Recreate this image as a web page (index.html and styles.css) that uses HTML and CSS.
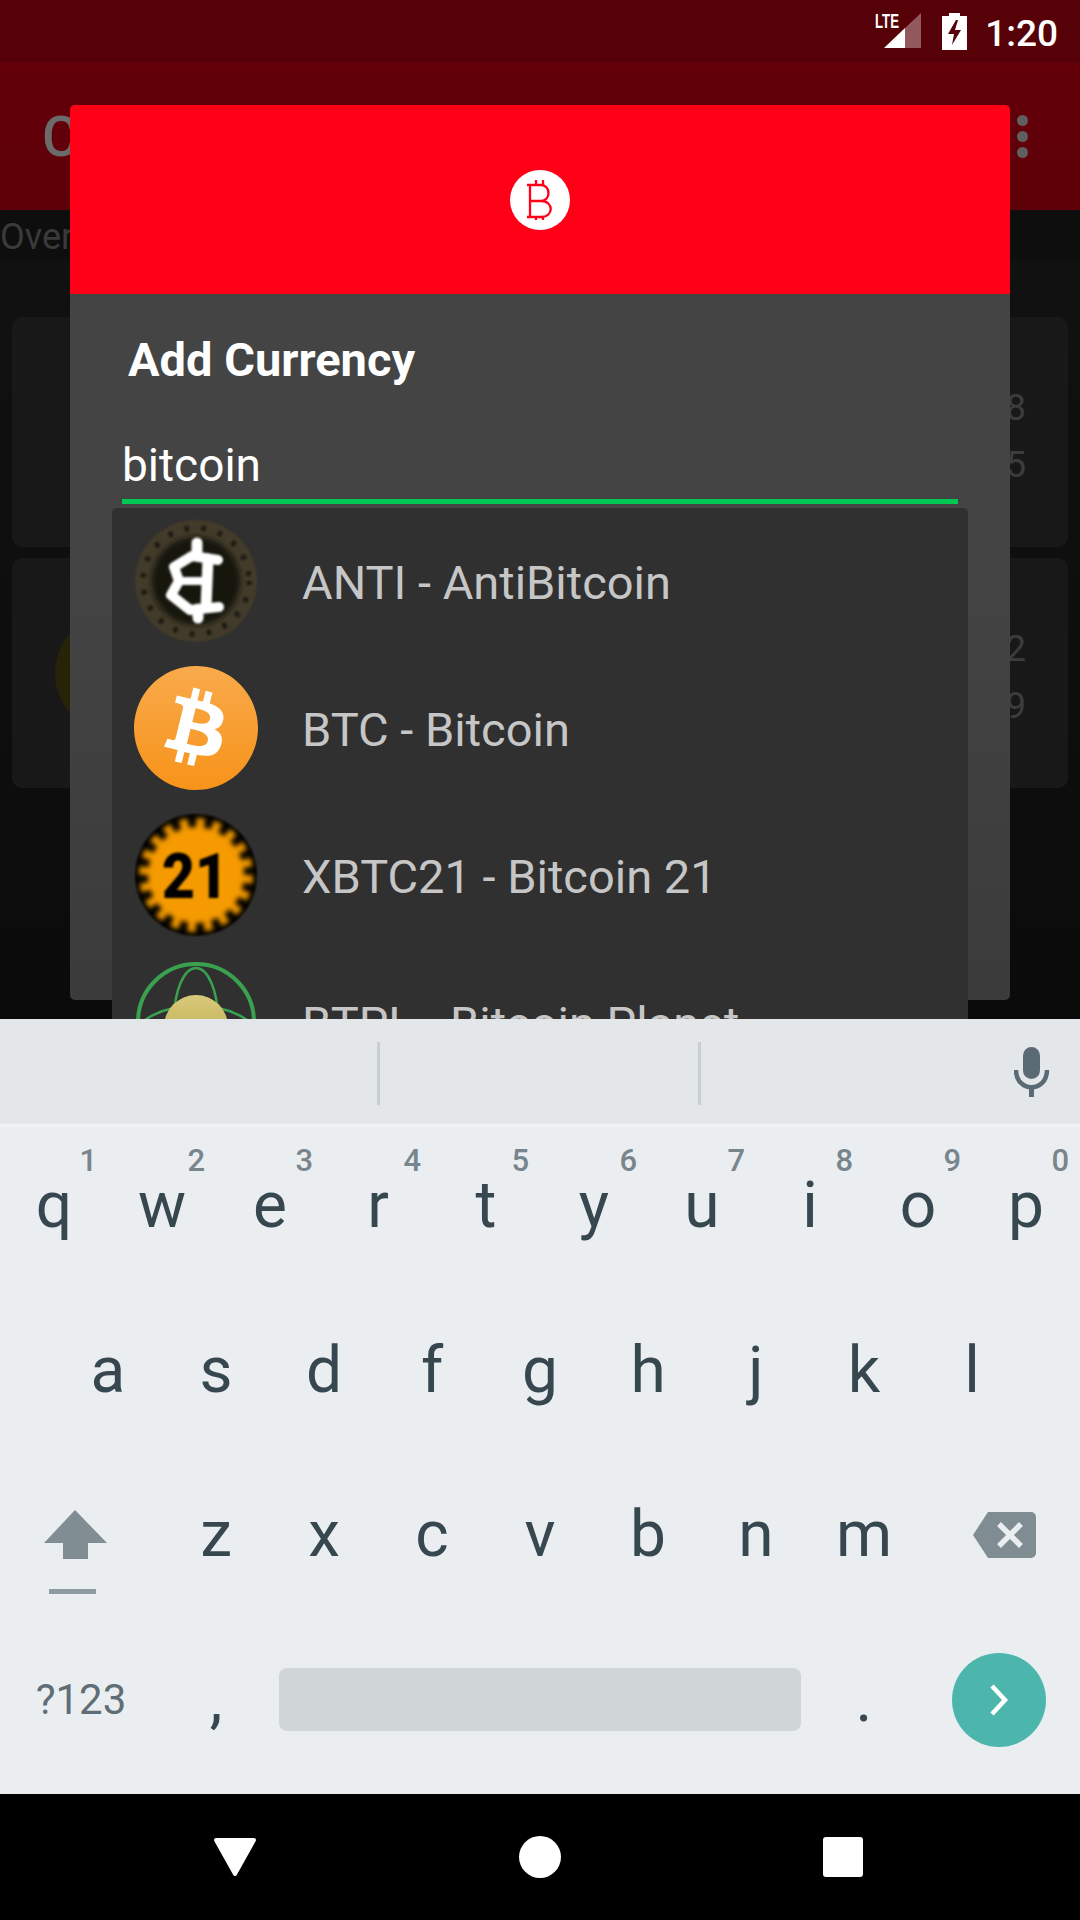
FILE: index.html
```html
<!DOCTYPE html>
<html lang="en">
<head>
<meta charset="utf-8">
<title>Add Currency</title>
<link rel="stylesheet" href="styles.css">
</head>
<body>
<div class="screen">
  <main class="app">
    <header class="status">
      <svg class="status-signal" width="48" height="46" viewBox="0 -6 48 46">
        <path d="M10 36 31 16 31 36Z" fill="#fff"/>
        <path d="M31 16 47 1 47 36 31 36Z" fill="#fff" fill-opacity=".35"/>
        <text x="1" y="16" class="lte" textLength="24" lengthAdjust="spacingAndGlyphs">LTE</text>
      </svg>
      <svg class="status-battery" width="25" height="37" viewBox="0 0 25 37">
        <path d="M0 3h7V0h11v3h7v34H0Z M14 7 6 21h6l-2 11 9-15h-6l3-10Z" fill="#fff" fill-rule="evenodd"/>
      </svg>
      <span class="status-time">1:20</span>
    </header>
    <div class="appbar">
      <span class="appbar-title">C</span>
      <span class="appbar-dots"><i></i><i></i><i></i></span>
    </div>
    <div class="tabs"><span class="tab">Over</span></div>
    <section class="cards">
      <article class="card">
        <span class="card-value">8</span>
        <span class="card-value">5</span>
      </article>
      <article class="card">
        <span class="card-coin"></span>
        <span class="card-value">2</span>
        <span class="card-value">9</span>
      </article>
    </section>

    <div class="dialog">
      <div class="dialog-head">
        <svg width="60" height="60" viewBox="0 0 60 60">
          <circle cx="30" cy="30" r="30" fill="#fff"/>
          <path d="M17 15 H31 C41 15 41 31 31 31 H20 M31 31 C44 31 44 47 31 47 H17 M20 15 V47 M26 10 V15 M33 10 V15 M26 47 V50 M33 47 V50" fill="none" stroke="#ff0016" stroke-width="2.3"/>
        </svg>
      </div>
      <div class="dialog-body">
        <h2 class="dialog-title">Add Currency</h2>
        <div class="field">bitcoin</div>
      </div>
      <ul class="dropdown">
        <li class="option">
          <svg class="coin" viewBox="0 0 124 124">
            <defs>
              <filter id="soft" x="-20%" y="-20%" width="140%" height="140%"><feGaussianBlur stdDeviation="2.4"/></filter>
              <filter id="softer" x="-20%" y="-20%" width="140%" height="140%"><feGaussianBlur stdDeviation="1.2"/></filter>
              <linearGradient id="gold" x1="0" y1="0" x2="0" y2="1">
                <stop offset="0" stop-color="#d8c97a"/>
                <stop offset="1" stop-color="#b8a648"/>
              </linearGradient>
            </defs>
            <circle cx="62" cy="62" r="61" fill="#423a29" filter="url(#softer)"/>
            <circle cx="62" cy="62" r="53" fill="none" stroke="#17140e" stroke-width="5" stroke-dasharray="4 13" filter="url(#softer)"/>
            <circle cx="62" cy="62" r="44" fill="#14120d" filter="url(#soft)"/>
            <g filter="url(#softer)" fill="none" stroke="#fff" stroke-linejoin="round" stroke-linecap="round">
              <path d="M63 24V36M64 90V99" stroke-width="11"/>
              <path d="M84 41 58 37 40 48 45 62 37 76 56 91 85 88" stroke-width="10"/>
              <path d="M74 40 72 88" stroke-width="11"/>
              <path d="M45 62H72" stroke-width="8"/>
            </g>
          </svg>
          <span class="option-label">ANTI - AntiBitcoin</span>
        </li>
        <li class="option">
          <svg class="coin" viewBox="0 0 24 24">
            <defs>
              <linearGradient id="btc" x1="0" y1="0" x2="0" y2="1">
                <stop offset="0" stop-color="#f9aa4b"/>
                <stop offset="1" stop-color="#f7931a"/>
              </linearGradient>
            </defs>
            <circle cx="12" cy="12" r="11" fill="#fff"/>
            <path fill="url(#btc)" d="M23.638 14.904c-1.602 6.43-8.113 10.34-14.542 8.736C2.67 22.05-1.244 15.525.362 9.105 1.962 2.67 8.475-1.243 14.9.358c6.43 1.605 10.342 8.115 8.738 14.548v-.002zm-6.35-4.613c.24-1.59-.974-2.45-2.64-3.03l.54-2.153-1.315-.33-.525 2.107c-.345-.087-.705-.167-1.064-.25l.526-2.127-1.32-.33-.54 2.165c-.285-.067-.565-.132-.84-.2l-1.815-.45-.35 1.407s.975.225.955.236c.535.136.63.486.615.766l-1.477 5.92c-.075.166-.24.406-.614.314.015.02-.96-.24-.96-.24l-.66 1.51 1.71.426.93.242-.54 2.19 1.32.327.54-2.17c.36.1.705.19 1.05.273l-.51 2.154 1.32.33.545-2.19c2.24.427 3.93.257 4.64-1.774.57-1.637-.03-2.58-1.217-3.196.854-.193 1.5-.76 1.68-1.93h.01zm-3.01 4.22c-.404 1.64-3.157.75-4.05.53l.72-2.9c.896.23 3.757.67 3.33 2.37zm.41-4.24c-.37 1.49-2.662.735-3.405.55l.654-2.64c.744.18 3.137.524 2.75 2.084v.006z"/>
          </svg>
          <span class="option-label">BTC - Bitcoin</span>
        </li>
        <li class="option">
          <svg class="coin" viewBox="0 0 124 124">
            <circle cx="62" cy="62" r="61" fill="#000" filter="url(#softer)"/>
            <g filter="url(#soft)">
              <circle cx="62" cy="62" r="48" fill="#f59a00"/>
              <circle cx="62" cy="62" r="50" fill="none" stroke="#f59a00" stroke-width="14" stroke-dasharray="7.85 7.85"/>
            </g>
            <text x="28" y="85" class="coin-21" textLength="66" lengthAdjust="spacingAndGlyphs" filter="url(#softer)">21</text>
          </svg>
          <span class="option-label">XBTC21 - Bitcoin 21</span>
        </li>
        <li class="option">
          <svg class="coin" viewBox="0 0 124 124">
            <circle cx="62" cy="62" r="58" fill="none" stroke="#3aa14e" stroke-width="4"/>
            <ellipse cx="62" cy="60" rx="22" ry="52" fill="none" stroke="#3aa14e" stroke-width="2.5"/>
            <ellipse cx="62" cy="76" rx="60" ry="30" fill="none" stroke="#3aa14e" stroke-width="2.5"/>
            <circle cx="62" cy="67" r="32" fill="url(#gold)"/>
          </svg>
          <span class="option-label">BTPL - Bitcoin Planet</span>
        </li>
      </ul>
    </div>
  </main>

  <section class="keyboard">
    <div class="strip">
      <span class="strip-cell"></span>
      <span class="strip-cell strip-cell-mid"></span>
      <span class="strip-mic">
        <svg width="36" height="52" viewBox="0 0 36 52">
          <rect x="9" y="1" width="17" height="32" rx="8.5" fill="#5b6b75"/>
          <path d="M2 24 C2 47 33 47 33 24" fill="none" stroke="#5b6b75" stroke-width="4.5"/>
          <rect x="15" y="40" width="5" height="11" fill="#5b6b75"/>
        </svg>
      </span>
    </div>
    <div class="keys">
      <div class="row">
        <span class="key">q<sup class="hint">1</sup></span>
        <span class="key">w<sup class="hint">2</sup></span>
        <span class="key">e<sup class="hint">3</sup></span>
        <span class="key">r<sup class="hint">4</sup></span>
        <span class="key">t<sup class="hint">5</sup></span>
        <span class="key">y<sup class="hint">6</sup></span>
        <span class="key">u<sup class="hint">7</sup></span>
        <span class="key">i<sup class="hint">8</sup></span>
        <span class="key">o<sup class="hint">9</sup></span>
        <span class="key">p<sup class="hint">0</sup></span>
      </div>
      <div class="row row-home">
        <span class="key">a</span><span class="key">s</span><span class="key">d</span><span class="key">f</span><span class="key">g</span><span class="key">h</span><span class="key">j</span><span class="key">k</span><span class="key">l</span>
      </div>
      <div class="row">
        <span class="key key-wide">
          <svg class="icon-shift" width="66" height="86" viewBox="0 0 66 86">
            <path d="M33 0 65 33H46V49H21V33H2Z" fill="#808d93"/>
            <rect x="7" y="79" width="47" height="5" fill="#8f9ba2"/>
          </svg>
        </span>
        <span class="key">z</span><span class="key">x</span><span class="key">c</span><span class="key">v</span><span class="key">b</span><span class="key">n</span><span class="key">m</span>
        <span class="key key-wide">
          <svg class="icon-delete" width="64" height="48" viewBox="0 0 64 48">
            <path d="M15 1H58a5 5 0 0 1 5 5V42a5 5 0 0 1-5 5H15L0 24Z" fill="#7f8c92"/>
            <path d="M26 13 48 35M48 13 26 35" stroke="#ebeef1" stroke-width="5.5"/>
          </svg>
        </span>
      </div>
      <div class="row">
        <span class="key key-wide key-sym">?123</span>
        <span class="key">,</span>
        <span class="key key-space"><span class="spacebar"></span></span>
        <span class="key">.</span>
        <span class="key key-wide">
          <span class="enter">
            <svg width="22" height="32" viewBox="0 0 22 32"><path d="M4 2 17 16 4 30" fill="none" stroke="#fff" stroke-width="4.5"/></svg>
          </span>
        </span>
      </div>
    </div>
  </section>

  <nav class="navbar">
    <svg width="44" height="40" viewBox="0 0 44 40"><path d="M3 3H41L22 37Z" fill="#fff" stroke="#fff" stroke-width="4" stroke-linejoin="round"/></svg>
    <span class="nav-home"></span>
    <span class="nav-recent"></span>
  </nav>
</div>
</body>
</html>
```

FILE: styles.css
```css
* { box-sizing: border-box; }

html, body {
  margin: 0;
  padding: 0;
  background: #000;
}

body {
  font-family: Roboto, "Noto Sans", sans-serif;
}

.screen {
  width: 1080px;
  height: 1920px;
  display: flex;
  flex-direction: column;
  overflow: hidden;
}

/* App behind the dialog */
.app {
  position: relative;
  height: 1019px;
  overflow: hidden;
  background: linear-gradient(#131313, #0b0b0b);
}

.status {
  height: 63px;
  background: #560008;
  display: flex;
  align-items: flex-start;
  justify-content: flex-end;
  padding: 6px 22px 0 0;
}

.status-signal { margin-right: 20px; }

.lte {
  font: 700 20px "Liberation Sans", sans-serif;
  fill: #fff;
}

.status-battery { margin-top: 7px; margin-right: 18px; }

.status-time {
  color: #fff;
  font-size: 37px;
  font-weight: 500;
  line-height: 44px;
  margin-top: 6px;
}

.appbar {
  height: 147px;
  background: linear-gradient(#63000a, #5e0008);
  display: flex;
  align-items: center;
  justify-content: space-between;
  padding: 0 52px 0 42px;
}

.appbar-title {
  color: #6b6b6b;
  font-size: 56px;
  font-weight: 500;
}

.appbar-dots {
  display: flex;
  flex-direction: column;
  gap: 5px;
}

.appbar-dots i {
  width: 11px;
  height: 11px;
  border-radius: 50%;
  background: #5f5f5f;
}

.tabs {
  height: 50px;
  background: #0e0e0e;
}

.tab {
  color: #3a3a3a;
  font-size: 36px;
  line-height: 54px;
}

.cards {
  padding: 57px 12px 0;
  display: flex;
  flex-direction: column;
  gap: 11px;
}

.card {
  position: relative;
  height: 230px;
  border-radius: 10px;
  background: #181818;
  display: flex;
  flex-direction: column;
  align-items: flex-end;
  justify-content: center;
  gap: 20px;
  padding: 10px 42px 0 0;
}

.card-value {
  color: #3c3c3c;
  font-size: 36px;
  line-height: 37px;
}

.card-coin {
  position: absolute;
  left: 43px;
  top: 55px;
  width: 120px;
  height: 120px;
  border-radius: 50%;
  background: #282208;
}

/* Dialog */
.dialog {
  position: absolute;
  left: 70px;
  top: 105px;
  width: 940px;
  height: 895px;
  border-radius: 5px;
  background: linear-gradient(#444444 50%, #3b3b3b);
}

.dialog-head {
  height: 189px;
  background: #ff0016;
  border-radius: 5px 5px 0 0;
  display: flex;
  align-items: center;
  justify-content: center;
}

.dialog-body {
  padding: 0 52px;
}

.dialog-title {
  margin: 0;
  padding: 40px 0 0 6px;
  color: #fff;
  font-size: 47px;
  font-weight: 700;
  line-height: 52px;
}

.field {
  margin-top: 48px;
  height: 70px;
  border-bottom: 5px solid #00c853;
  color: #fff;
  font-size: 46px;
  line-height: 62px;
}

.dropdown {
  position: absolute;
  left: 42px;
  top: 403px;
  width: 856px;
  margin: 0;
  padding: 11px 0 0;
  list-style: none;
  border-radius: 5px;
  background: #303030;
  display: flex;
  flex-direction: column;
  gap: 23px;
}

.option {
  display: flex;
  align-items: center;
  height: 124px;
  padding-left: 22px;
  flex: none;
}

.coin {
  width: 124px;
  height: 124px;
  flex: none;
}

.coin-21 {
  font: 900 63px Roboto, sans-serif;
  fill: #000;
}

.option-label {
  margin-left: 44px;
  padding-top: 3px;
  color: #c6c6c6;
  font-size: 47px;
}

/* Keyboard */
.keyboard {
  height: 775px;
  background: #ebeef1;
  display: flex;
  flex-direction: column;
}

.strip {
  flex: none;
  height: 108px;
  background: #e3e7ea;
  border-bottom: 3px solid #f1f3f5;
  display: flex;
  align-items: center;
}

.strip-cell {
  width: 380px;
  height: 63px;
  margin-top: 3px;
  border-right: 3px solid #c9ced1;
}

.strip-cell-mid { width: 321px; }

.strip-mic {
  flex: 1;
  display: flex;
  align-items: center;
  justify-content: flex-end;
  padding-right: 30px;
}

.keys {
  flex: 1;
  margin-top: -3px;
  padding-bottom: 12px;
  display: grid;
  grid-template-rows: repeat(4, 1fr);
}

.row {
  display: flex;
  align-items: stretch;
}

.row-home { padding-left: 54px; }

.key {
  position: relative;
  flex: none;
  width: 108px;
  display: flex;
  align-items: center;
  justify-content: center;
  color: #37474f;
  font-size: 64px;
  line-height: 1;
}

.hint {
  position: absolute;
  right: 11px;
  top: 21px;
  color: #78858d;
  font-size: 31px;
  font-weight: 500;
  line-height: 1;
}

.key-wide { width: 162px; }

.key-sym {
  color: #5f6e76;
  font-size: 42px;
}

.key-space { width: 540px; }

.icon-shift { margin: 36px 12px 0 0; }

.icon-delete { margin-left: 12px; }

.spacebar {
  align-self: center;
  width: 522px;
  height: 63px;
  border-radius: 8px;
  background: #d0d5d8;
}

.enter {
  width: 94px;
  height: 94px;
  border-radius: 50%;
  background: #4db6ac;
  display: flex;
  align-items: center;
  justify-content: center;
}

/* System navigation */
.navbar {
  height: 126px;
  background: #000;
  display: flex;
  align-items: center;
  justify-content: center;
  gap: 262px;
  padding-right: 4px;
}

.nav-home {
  width: 42px;
  height: 42px;
  border-radius: 50%;
  background: #fff;
}

.nav-recent {
  width: 40px;
  height: 40px;
  border-radius: 3px;
  background: #fff;
}
```
